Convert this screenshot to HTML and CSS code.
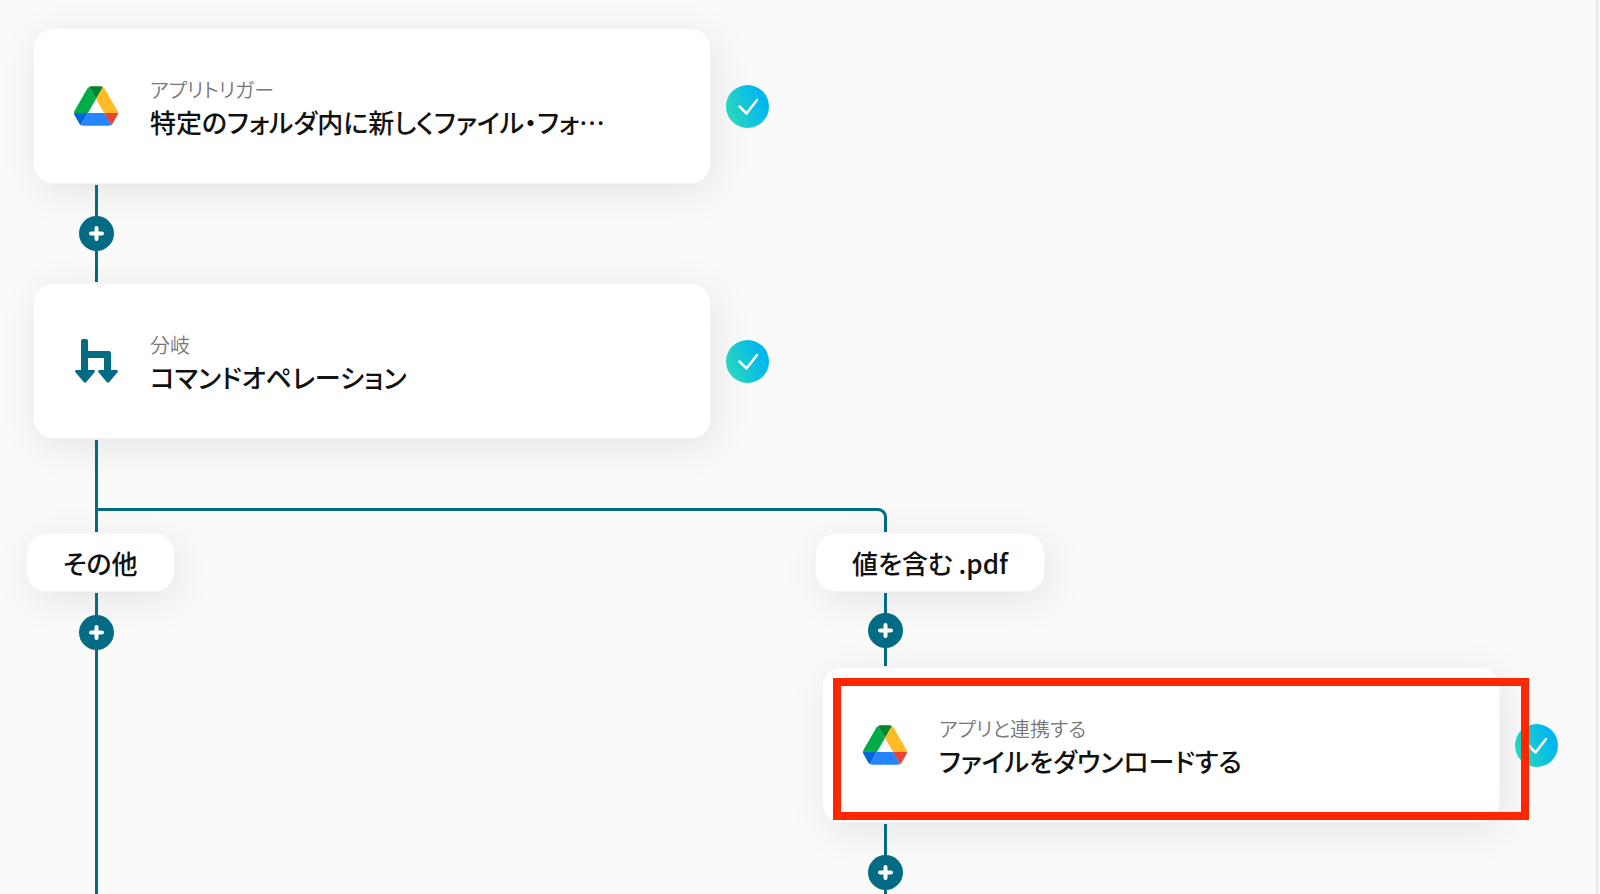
FILE: index.html
```html
<!DOCTYPE html>
<html lang="ja">
<head>
<meta charset="UTF-8">
<meta name="viewport" content="width=device-width, initial-scale=1">
<title>フローボット</title>
<link rel="stylesheet" href="styles.css">
</head>
<body>
	<!-- shared icons -->
	<svg class="sprite" aria-hidden="true">
		<defs>
			<linearGradient id="check-fill" x1="0" y1="0.7" x2="1" y2="0.3">
				<stop offset="0" stop-color="#2bd9bd"/>
				<stop offset="0.85" stop-color="#00b7ee"/>
			</linearGradient>
		</defs>
		<symbol id="drive" viewBox="0 0 87.3 78">
			<path d="m6.6 66.85 3.85 6.65c.8 1.4 1.95 2.5 3.3 3.3l13.75-23.8h-27.5c0 1.55.4 3.1 1.2 4.5z" fill="#0066da"/>
			<path d="m43.65 25-13.75-23.8c-1.35.8-2.5 1.9-3.3 3.3l-25.4 44a9.06 9.06 0 0 0 -1.2 4.5h27.5z" fill="#00ac47"/>
			<path d="m73.55 76.8c1.35-.8 2.5-1.9 3.3-3.3l1.6-2.75 7.65-13.25c.8-1.4 1.2-2.95 1.2-4.5h-27.502l5.852 11.5z" fill="#ea4335"/>
			<path d="m43.65 25 13.75-23.8c-1.35-.8-2.9-1.2-4.5-1.2h-18.5c-1.6 0-3.15.45-4.5 1.2z" fill="#00832d"/>
			<path d="m59.8 53h-32.3l-13.75 23.8c1.35.8 2.9 1.2 4.5 1.2h50.8c1.6 0 3.15-.45 4.5-1.2z" fill="#2684fc"/>
			<path d="m73.4 26.5-12.7-22c-.8-1.4-1.95-2.5-3.3-3.3l-13.75 23.8 16.15 28h27.45c0-1.55-.4-3.1-1.2-4.5z" fill="#ffba25"/>
		</symbol>
		<symbol id="branch" viewBox="0 0 44 44">
			<path fill="#046b84" d="M7 2a2 2 0 0 1 2-2h3a2 2 0 0 1 2 2v10h21a2 2 0 0 1 2 2v17h5.500a1.300 1.300 0 0 1 1 2.200l-8 9.600a2 2 0 0 1-3 0l-8-9.600a1.300 1.300 0 0 1 1-2.200H30V19H14v12h5.500a1.300 1.300 0 0 1 1 2.200l-8 9.600a2 2 0 0 1-3 0l-8-9.600a1.300 1.300 0 0 1 1-2.200H7z"/>
		</symbol>
		<symbol id="plus" viewBox="0 0 15 15">
			<path d="M7.500 2v11M2 7.500h11" fill="none" stroke="#fff" stroke-width="4" stroke-linecap="round"/>
		</symbol>
		<symbol id="check" viewBox="0 0 43 43">
			<circle cx="21.5" cy="21.5" r="21.5" fill="url(#check-fill)"/>
			<path d="M13.500 21.500l7 7 10.500-13.500" fill="none" stroke="#fff" stroke-width="2.500" stroke-linecap="round" stroke-linejoin="round"/>
		</symbol>
	</svg>

	<main class="canvas">
		<section class="trunk">
			<div class="step">
				<article class="card">
					<svg class="icon"><use href="#drive"/></svg>
					<div class="text">
						<p class="kind">アプリトリガー</p>
						<h2 class="title">特定のフォルダ内に新しくファイル・フォ…</h2>
					</div>
				</article>
				<svg class="status" role="img" aria-label="設定済み"><use href="#check"/></svg>
			</div>

			<div class="connector between">
				<button class="add" type="button" aria-label="追加"><svg><use href="#plus"/></svg></button>
			</div>

			<div class="step">
				<article class="card">
					<svg class="icon"><use href="#branch"/></svg>
					<div class="text">
						<p class="kind">分岐</p>
						<h2 class="title">コマンドオペレーション</h2>
					</div>
				</article>
				<svg class="status" role="img" aria-label="設定済み"><use href="#check"/></svg>
			</div>

			<div class="fork">
				<div class="connector"></div>
				<div class="arm"></div>
			</div>
		</section>

		<section class="path">
			<h3 class="label">その他</h3>
			<div class="connector tail">
				<button class="add" type="button" aria-label="追加"><svg><use href="#plus"/></svg></button>
			</div>
		</section>

		<section class="path">
			<h3 class="label">値を含む .pdf</h3>
			<div class="connector short">
				<button class="add" type="button" aria-label="追加"><svg><use href="#plus"/></svg></button>
			</div>

			<div class="step">
				<article class="card">
					<svg class="icon"><use href="#drive"/></svg>
					<div class="text">
						<p class="kind">アプリと連携する</p>
						<h2 class="title">ファイルをダウンロードする</h2>
					</div>
				</article>
				<svg class="status" role="img" aria-label="設定済み"><use href="#check"/></svg>
				<div class="highlight"></div>
			</div>

			<div class="connector tail after-card">
				<button class="add" type="button" aria-label="追加"><svg><use href="#plus"/></svg></button>
			</div>
		</section>
	</main>
</body>
</html>
```
FILE: styles.css
```css
* {
	box-sizing: border-box;
}

body {
	margin: 0;
	background: #fafafa;
	color: #111;
	font-family: "Noto Sans CJK JP", "Noto Sans", sans-serif;
	font-feature-settings: "palt";
}

h2, h3, p {
	margin: 0;
}

.sprite {
	position: absolute;
	width: 0;
	height: 0;
}

/* two equal columns, one per branch */
.canvas {
	display: grid;
	grid-template-columns: minmax(0, 1fr) minmax(0, 1fr);
	grid-template-rows: auto 1fr;
	column-gap: 8px;
	min-height: 100vh;
	margin-right: 2px;
	padding: 28px 0 0 26px;
	border-right: 2px solid #e6e6e6;
}

.trunk {
	grid-column: 1;
}

.path {
	grid-row: 2;
	display: flex;
	flex-direction: column;
	align-items: flex-start;
}

/* cards */
.step {
	position: relative;
	display: flex;
	align-items: center;
	align-self: stretch;
	gap: 15px;
	padding: 0 38px 0 7px;
}

.card {
	flex: 1;
	display: flex;
	align-items: center;
	gap: 32px;
	min-width: 0;
	height: 156px;
	padding: 0 40px;
	background: #fff;
	border: 1px solid #f5f5f5;
	border-radius: 20px;
	box-shadow: 4px 8px 40px rgba(0, 0, 0, 0.09);
}

.icon {
	flex: none;
	width: 44px;
	height: 44px;
}

.text {
	min-width: 0;
	white-space: nowrap;
}

.kind {
	color: #777;
	font-size: 20px;
	font-weight: 350;
	line-height: 32px;
}

.title {
	font-size: 26px;
	font-weight: 500;
	line-height: 32px;
}

.status {
	flex: none;
	width: 43px;
	height: 43px;
}

.highlight {
	position: absolute;
	top: 11px;
	right: 67px;
	bottom: 3px;
	left: 18px;
	border: 8px solid #ff2600;
}

/* branch names */
.label {
	position: relative;
	padding: 0 36px;
	background: #fff;
	border: 1px solid #f5f5f5;
	border-radius: 20px;
	box-shadow: 4px 8px 40px rgba(0, 0, 0, 0.09);
	font-size: 26px;
	font-weight: 500;
	line-height: 57px;
	white-space: nowrap;
}

/* lines and add buttons */
.connector {
	position: relative;
	display: flex;
	flex-direction: column;
	align-items: center;
	width: 3px;
	margin: 1px 0 1px 69px;
	background: #046b84;
}

.between {
	justify-content: center;
	height: 97px;
}

.short {
	height: 73px;
	padding-top: 20px;
}

.tail {
	flex: 1;
	margin-bottom: 0;
	padding-top: 22px;
}

.after-card {
	padding-top: 31px;
}

.add {
	flex: none;
	display: flex;
	align-items: center;
	justify-content: center;
	width: 35px;
	height: 35px;
	padding: 0;
	background: #046b84;
	border: 0;
	border-radius: 50%;
	cursor: pointer;
}

.add svg {
	width: 15px;
	height: 15px;
}

.fork {
	position: relative;
	display: flex;
	height: 94px;
}

/* runs over to the second column */
.arm {
	position: absolute;
	top: 69px;
	right: -80px;
	bottom: 1px;
	left: 69px;
	border: solid #046b84;
	border-width: 3px 3px 0 0;
	border-radius: 0 9px 0 0;
}
```
